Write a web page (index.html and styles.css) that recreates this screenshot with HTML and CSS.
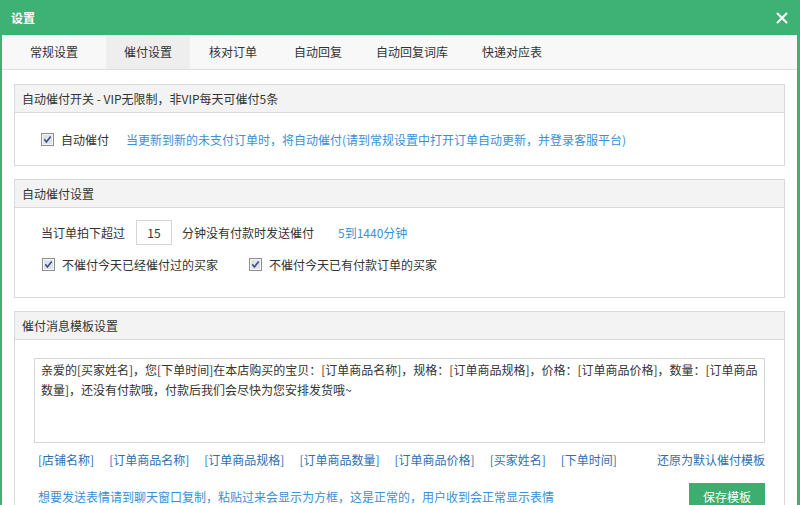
FILE: index.html
```html
<!DOCTYPE html>
<html lang="zh-CN">
<head>
<meta charset="utf-8">
<title>设置</title>
<link rel="stylesheet" href="styles.css">
</head>
<body>
<div class="titlebar">
  <span class="title">设置</span>
  <svg class="close" width="12" height="12" viewBox="0 0 12 12"><path d="M1.5 1.5 L10.5 10.5 M10.5 1.5 L1.5 10.5" stroke="#fff" stroke-width="2" stroke-linecap="round"/></svg>
</div>
<div class="main">
  <div class="tabs">
    <div class="tab t1">常规设置</div>
    <div class="tab t2 active">催付设置</div>
    <div class="tab t3">核对订单</div>
    <div class="tab t4">自动回复</div>
    <div class="tab t5">自动回复词库</div>
    <div class="tab t6">快递对应表</div>
  </div>
  <div class="content">
    <div class="panel">
      <div class="panel-head">自动催付开关 - VIP无限制，非VIP每天可催付5条</div>
      <div class="panel-body body1">
        <label class="check">
          <svg width="13" height="13" viewBox="0 0 13 13"><rect x="0.5" y="0.5" width="12" height="12" fill="#f6f6f6" stroke="#8e8f8f"/><rect x="2" y="2" width="9" height="9" fill="#dfe3e8"/><path d="M3.3 6.3 L5.4 8.9 L9.7 3.6" fill="none" stroke="#3a4f86" stroke-width="1.6"/></svg>
          <span>自动催付</span>
        </label>
        <span class="info">当更新到新的未支付订单时，将自动催付(请到常规设置中打开订单自动更新，并登录客服平台)</span>
      </div>
    </div>

    <div class="panel">
      <div class="panel-head">自动催付设置</div>
      <div class="panel-body body2">
        <div class="row">
          <span>当订单拍下超过</span>
          <div class="num">15</div>
          <span>分钟没有付款时发送催付</span>
          <span class="info range">5到1440分钟</span>
        </div>
        <div class="row row2">
          <label class="check">
            <svg width="13" height="13" viewBox="0 0 13 13"><rect x="0.5" y="0.5" width="12" height="12" fill="#f6f6f6" stroke="#8e8f8f"/><rect x="2" y="2" width="9" height="9" fill="#dfe3e8"/><path d="M3.3 6.3 L5.4 8.9 L9.7 3.6" fill="none" stroke="#3a4f86" stroke-width="1.6"/></svg>
            <span>不催付今天已经催付过的买家</span>
          </label>
          <label class="check second">
            <svg width="13" height="13" viewBox="0 0 13 13"><rect x="0.5" y="0.5" width="12" height="12" fill="#f6f6f6" stroke="#8e8f8f"/><rect x="2" y="2" width="9" height="9" fill="#dfe3e8"/><path d="M3.3 6.3 L5.4 8.9 L9.7 3.6" fill="none" stroke="#3a4f86" stroke-width="1.6"/></svg>
            <span>不催付今天已有付款订单的买家</span>
          </label>
        </div>
      </div>
    </div>

    <div class="panel last">
      <div class="panel-head">催付消息模板设置</div>
      <div class="panel-body body3">
        <div class="textarea">亲爱的[买家姓名]，您[下单时间]在本店购买的宝贝：[订单商品名称]，规格：[订单商品规格]，价格：[订单商品价格]，数量：[订单商品数量]，还没有付款哦，付款后我们会尽快为您安排发货哦~</div>
        <div class="tags">
          <span class="tag">[店铺名称]</span>
          <span class="tag">[订单商品名称]</span>
          <span class="tag">[订单商品规格]</span>
          <span class="tag">[订单商品数量]</span>
          <span class="tag">[订单商品价格]</span>
          <span class="tag">[买家姓名]</span>
          <span class="tag">[下单时间]</span>
          <span class="tag restore">还原为默认催付模板</span>
        </div>
        <div class="footer">
          <span class="info">想要发送表情请到聊天窗口复制，粘贴过来会显示为方框，这是正常的，用户收到会正常显示表情</span>
          <button class="save">保存模板</button>
        </div>
      </div>
    </div>
  </div>
</div>
</body>
</html>
```

FILE: styles.css
```css
* { box-sizing: border-box; }
html, body {
  margin: 0;
  padding: 0;
}
body {
  width: 800px;
  height: 505px;
  overflow: hidden;
  background: #3db274;
  font-family: "Noto Sans CJK SC", "Microsoft YaHei", sans-serif;
  font-size: 12px;
  color: #333;
}
.titlebar {
  height: 35px;
  display: flex;
  align-items: center;
  justify-content: space-between;
  padding: 0 12px 0 11px;
  color: #fff;
}
.title {
  font-weight: bold;
  font-size: 12px;
}
.close { display: block; margin-top: 1px; }
.main {
  margin: 0 3px 0 2px;
  background: #fff;
  height: 470px;
  overflow: hidden;
}
.tabs {
  display: flex;
  height: 35px;
  background: #f8f8f8;
  border-bottom: 1px solid #dedede;
}
.tab {
  height: 34px;
  line-height: 34px;
  text-align: center;
  color: #333;
}
.tab.active { background: #eeeeee; }
.t1 { width: 104px; }
.t2 { width: 84px; }
.t3 { width: 86px; }
.t4 { width: 84px; }
.t5 { width: 104px; }
.t6 { width: 96px; }
.content {
  padding: 14px 12px 0 12px;
}
.panel {
  border: 1px solid #d7d9db;
  margin-bottom: 13px;
}
.panel-head {
  height: 28px;
  line-height: 27px;
  background: #f3f3f3;
  border-bottom: 1px solid #d7d9db;
  padding-left: 7px;
}
.panel-body { padding-left: 26px; }
.body1 {
  height: 52px;
  display: flex;
  align-items: center;
}
.check {
  display: inline-flex;
  align-items: center;
  gap: 7px;
}
.check svg { display: block; }
.info { color: #3b8fd5; }
.body1 .info { margin-left: 17px; }
.body2 {
  height: 89px;
  padding-top: 12px;
}
.row {
  display: flex;
  align-items: center;
}
.num {
  width: 36px;
  height: 25px;
  line-height: 23px;
  border: 1px solid #d6d6d6;
  text-align: center;
  margin: 0 10px 0 11px;
}
.range { margin-left: 24px; }
.row2 {
  margin-top: 11px;
  padding-left: 1px;
}
.second { margin-left: 31px; }
.body3 {
  padding: 18px 19px 0 19px;
  height: 170px;
}
.textarea {
  height: 85px;
  border: 1px solid #d6d6d6;
  padding: 1px 6px;
  line-height: 20px;
  color: #333;
}
.tags {
  display: flex;
  gap: 15px;
  margin-top: 7px;
  padding-left: 4px;
  line-height: 20px;
}
.tag { color: #2d6fb3; }
.restore { margin-left: auto; }
.footer {
  display: flex;
  align-items: center;
  justify-content: space-between;
  margin-top: 13px;
  padding-left: 4px;
}
.save {
  width: 76px;
  height: 26px;
  border: none;
  background: #3dae6f;
  color: #fff;
  font-family: inherit;
  font-size: 12px;
  padding: 0;
}
```
